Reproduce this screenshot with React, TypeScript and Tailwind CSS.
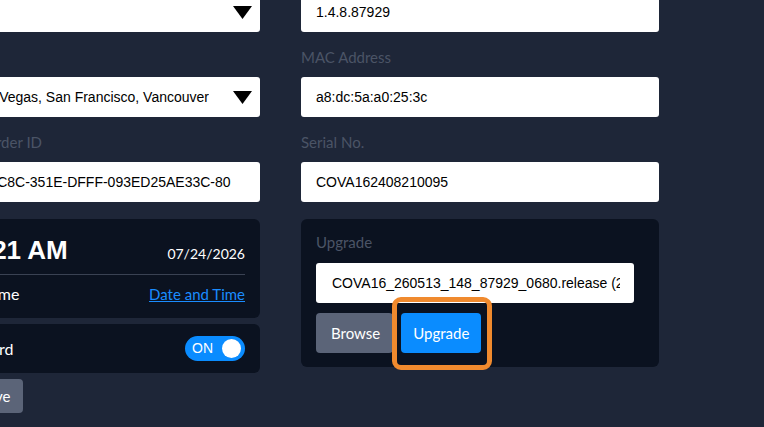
const label = "block text-[15px] leading-[16px] text-[#4b5466] mb-3 font-['Lato',sans-serif]";
const field =
  "w-full h-10 rounded-[3px] bg-white px-[15px] text-[14px] text-black font-['Liberation_Sans',Arial,sans-serif] outline-none";

const Caret = () => (
  <svg width="19" height="13" viewBox="0 0 19 13" className="shrink-0">
    <path d="M0 0H19L9.5 13Z" fill="#000" />
  </svg>
);

const Dropdown = ({ value }: { value: string }) => (
  <div className="w-full h-10 rounded-[3px] bg-white pl-6 pr-2 flex items-center justify-between">
    <span className="text-[14px] text-black whitespace-nowrap overflow-hidden font-['Liberation_Sans',Arial,sans-serif]">
      {value}
    </span>
    <Caret />
  </div>
);

const Field = ({ title, value }: { title: string; value: string }) => (
  <div className="mb-[17px]">
    <span className={label}>{title}</span>
    <input readOnly value={value} className={field} />
  </div>
);

const App = () => {
  return (
    <div className="min-h-screen bg-[#1e2638] overflow-hidden font-['Lato',sans-serif]">
      <div className="flex gap-[41px] ml-[-98px] mt-[-36px]">
        {/* left column */}
        <div className="w-[358px] shrink-0">
          <div className="mb-[17px]">
            <span className={label}>Language</span>
            <Dropdown value="English" />
          </div>
          <div className="mb-[17px]">
            <span className={label}>Time Zone</span>
            <Dropdown value="GMT-8 Las Vegas, San Francisco, Vancouver" />
          </div>
          <Field title="Network Recorder ID" value="E4B5-7F29AC8C-351E-DFFF-093ED25AE33C-80" />

          <div className="rounded-md bg-[#0b1220] px-[15px] pt-[15px] pb-[12px]">
            <div className="flex items-baseline justify-between">
              <span className="text-[26px] leading-[32px] font-bold text-white font-['Liberation_Sans',Arial,sans-serif]">
                10:37:21 AM
              </span>
              <span className="text-[14px] text-white">07/24/2026</span>
            </div>
            <div className="mt-2 border-t border-[#3a4253]" />
            <div className="mt-[7px] flex items-center justify-between leading-6">
              <span className="text-[16px] text-white">Date and Time</span>
              <a href="#" className="text-[15px] text-[#1a8cff] underline">
                Date and Time
              </a>
            </div>
          </div>

          <div className="mt-[6px] rounded-md bg-[#0b1220] px-[15px] py-3 flex items-center justify-between">
            <span className="text-[16px] text-white">Auto Forward</span>
            <button className="w-[60px] h-[25px] rounded-full bg-[#0a8cff] flex items-center justify-between pl-[7px] pr-1">
              <span className="text-[14px] text-white font-['Liberation_Sans',Arial,sans-serif]">ON</span>
              <span className="w-[19px] h-[19px] rounded-full bg-white" />
            </button>
          </div>

          <div className="mt-[6px] flex gap-2">
            <button className="h-[34px] px-[10px] rounded bg-[#5b6478] text-[15px] text-white">Reset</button>
            <button className="h-[34px] px-[13px] rounded bg-[#5b6478] text-[15px] text-white">Save</button>
          </div>
        </div>

        {/* right column */}
        <div className="w-[358px] shrink-0">
          <Field title="Firmware Version" value="1.4.8.87929" />
          <Field title="MAC Address" value="a8:dc:5a:a0:25:3c" />
          <Field title="Serial No." value="COVA162408210095" />

          <div className="rounded-md bg-[#0b1220] px-[15px] pt-[15px] pb-[14px]">
            <span className="block text-[15px] leading-[16px] text-[#4b5466] mb-[13px]">Upgrade</span>
            <input
              readOnly
              value="COVA16_260513_148_87929_0680.release (2).bin"
              className="w-[318px] h-10 rounded-[3px] bg-white pl-4 pr-[14px] text-[14px] text-black font-['Liberation_Sans',Arial,sans-serif] outline-none"
            />
            <div className="mt-[10px] flex gap-2">
              <button className="h-10 pl-[15px] pr-[13px] rounded bg-[#5b6478] text-[15px] text-white">Browse</button>
              <div className="relative">
                <button className="h-10 px-3 rounded bg-[#0a8cff] text-[15px] text-white">Upgrade</button>
                <div className="absolute left-[-9px] right-[-11px] top-[-16px] bottom-[-17px] border-[5px] border-[#f08a2e] rounded-[9px] pointer-events-none" />
              </div>
            </div>
          </div>
        </div>
      </div>
    </div>
  );
};

export default App;
